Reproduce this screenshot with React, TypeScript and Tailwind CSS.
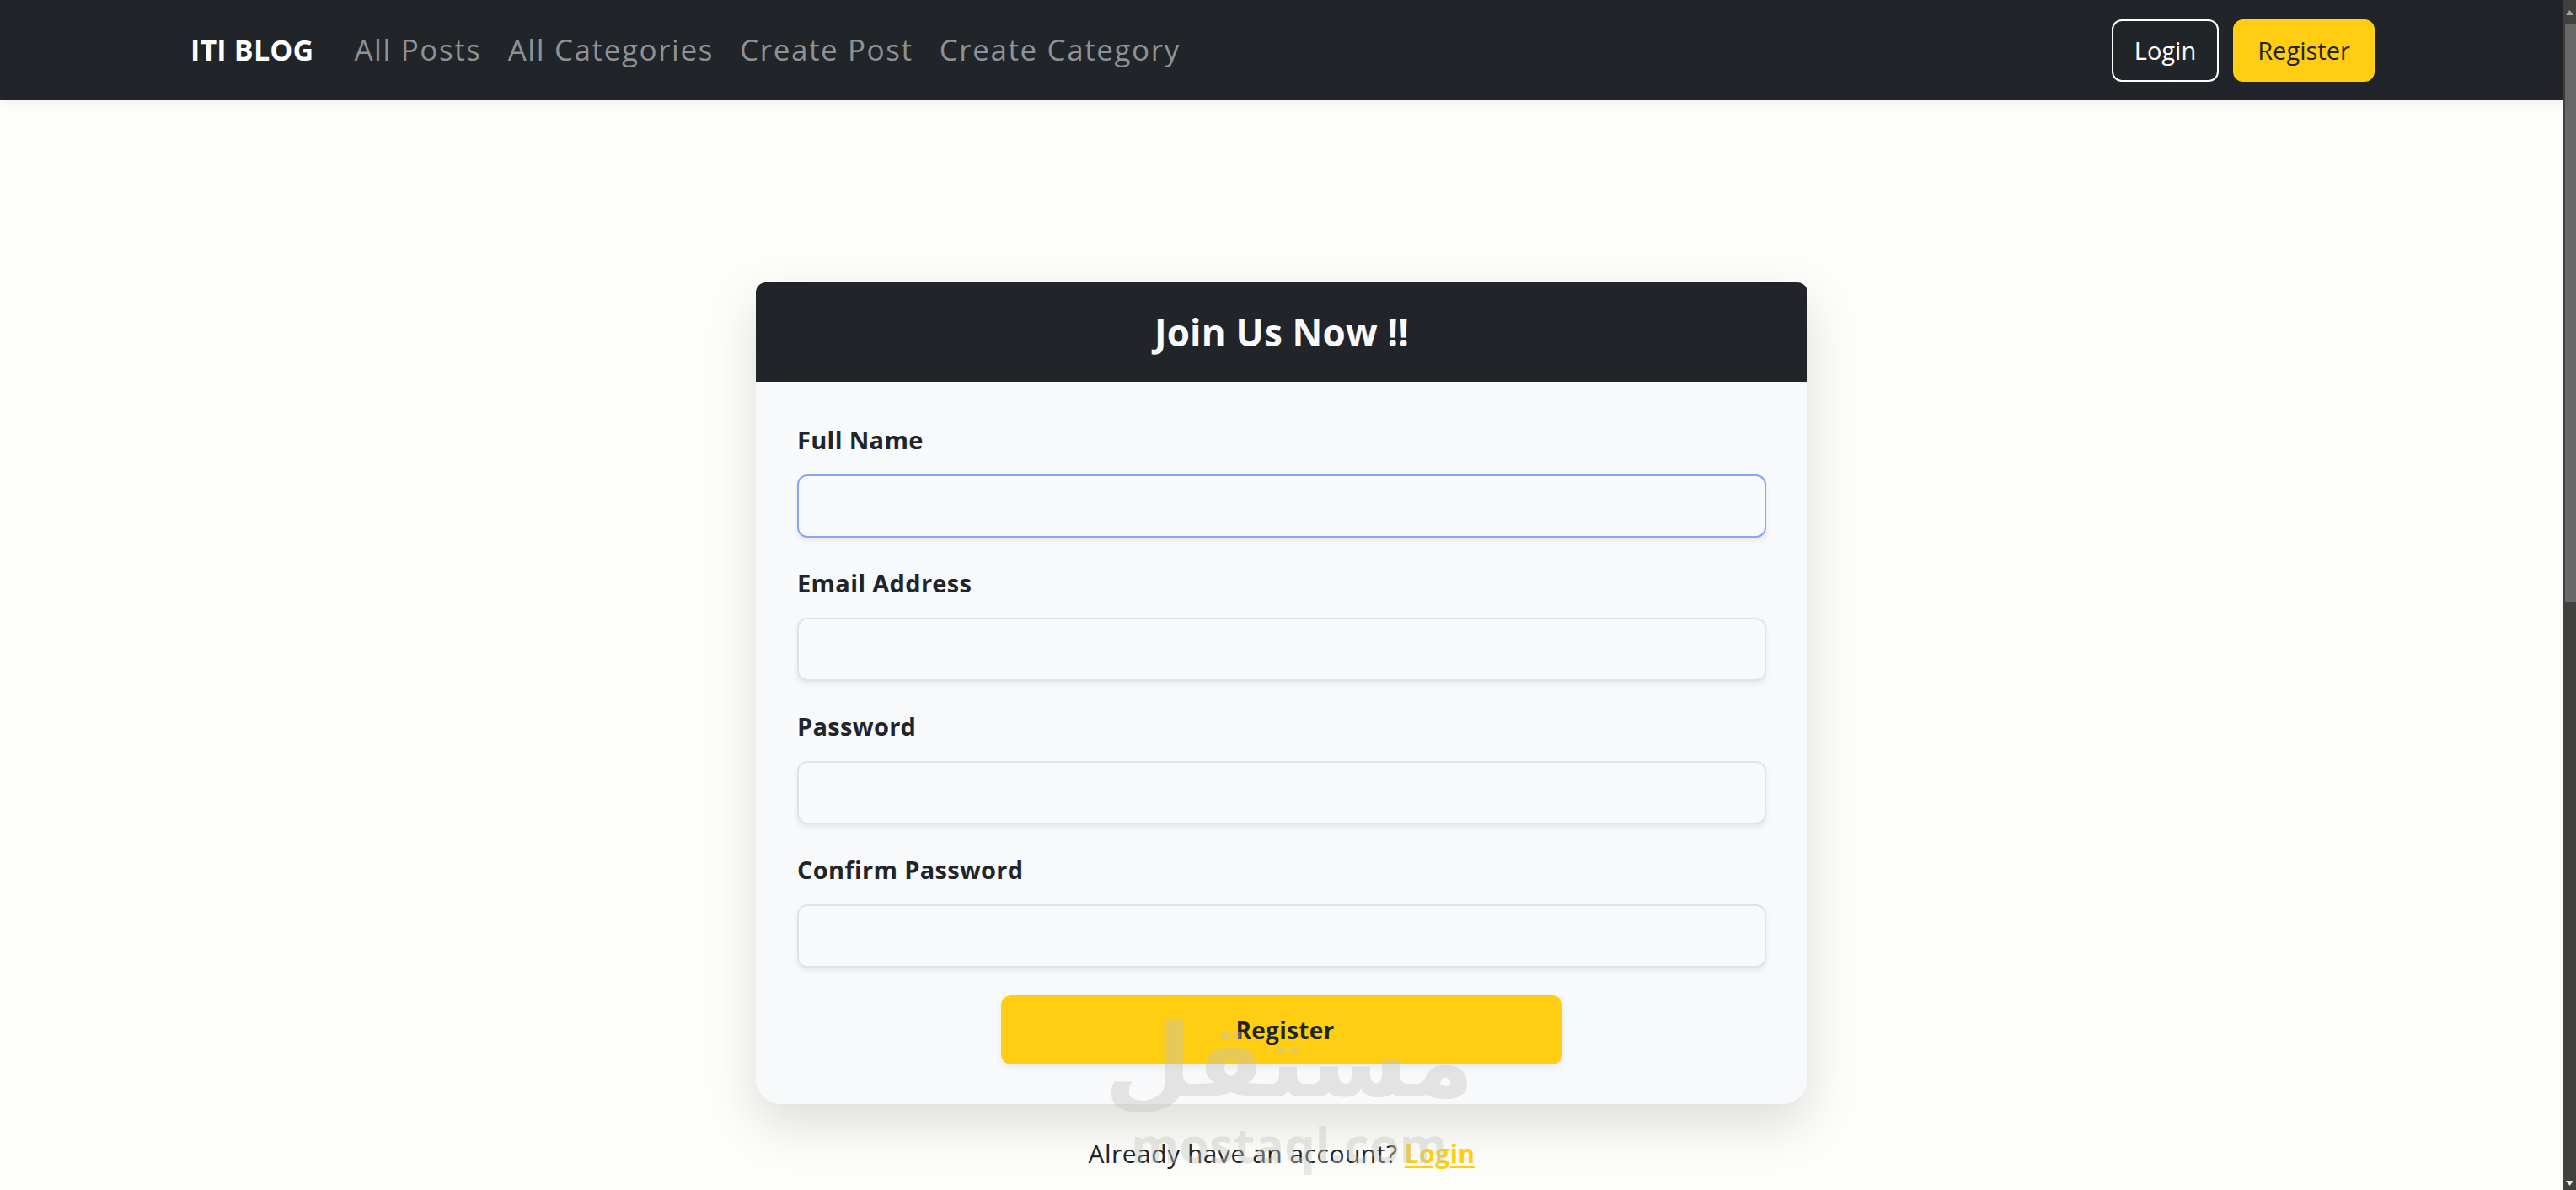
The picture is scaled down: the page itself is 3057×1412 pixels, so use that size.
const links = ["All Posts", "All Categories", "Create Post", "Create Category"];

const fields = [
  { label: "Full Name", type: "text", focused: true },
  { label: "Email Address", type: "email", focused: false },
  { label: "Password", type: "password", focused: false },
  { label: "Confirm Password", type: "password", focused: false },
];

const font = "font-['Open_Sans','Noto_Sans',sans-serif]";

export default function App() {
  return (
    <div className={`flex h-[1412px] w-full overflow-hidden bg-[#fdfdf9] ${font}`}>
      <div className="relative flex min-w-0 flex-1 flex-col">
        {/* Navbar */}
        <header className="relative z-10 flex h-[119px] shrink-0 items-center justify-between bg-[#212529] pl-[226px] pr-[224px] shadow-[0_4px_10px_rgba(0,0,0,0.05)]">
          <div className="flex items-center">
            <span className="mr-[48px] text-[34px] font-bold tracking-[0.2px] text-white">ITI BLOG</span>
            <nav className="flex items-center gap-[31px]">
              {links.map((l) => (
                <a key={l} className="text-[35px] tracking-[1.6px] text-[#8f9194]">
                  {l}
                </a>
              ))}
            </nav>
          </div>
          <div className="flex items-center gap-[17px]">
            <button className="h-[74px] w-[127px] rounded-[12px] border-2 border-white text-[29px] text-white">
              Login
            </button>
            <button className="h-[74px] w-[168px] rounded-[12px] bg-[#ffce12] text-[29px] text-[#212529]">
              Register
            </button>
          </div>
        </header>

        {/* Register card */}
        <main className="flex flex-col items-center pt-[216px]">
          <div className="w-[1248px] rounded-b-[30px] rounded-t-[12px] bg-[#f8f9fb] shadow-[0_24px_60px_rgba(0,0,0,0.13)]">
            <div className="flex h-[118px] items-center justify-center rounded-t-[12px] bg-[#212529]">
              <h1 className="text-[44px] font-bold tracking-[0.2px] text-[#f8f9fa]">Join Us Now !!</h1>
            </div>
            <form className="flex flex-col px-[49px] pb-[47px] pt-[48px]">
              {fields.map((f) => (
                <div key={f.label} className="mb-[33px] flex flex-col">
                  <label className="mb-[20px] text-[29px] font-bold leading-[42px] tracking-[0.3px] text-[#212529]">
                    {f.label}
                  </label>
                  <input
                    type={f.type}
                    className={`h-[75px] w-full rounded-[12px] border-2 bg-[#f8f9fb] px-4 shadow-[0_4px_6px_rgba(0,0,0,0.07)] outline-none ${
                      f.focused ? "border-[#86a8f6]" : "border-[#e1e3e6]"
                    }`}
                  />
                </div>
              ))}
              <button
                type="button"
                className="mx-auto h-[82px] w-[666px] rounded-[12px] bg-[#ffce12] pl-[8px] text-[28px] font-bold tracking-[0.3px] text-[#212529] shadow-[0_4px_8px_rgba(0,0,0,0.06)]"
              >
                Register
              </button>
            </form>
          </div>
          <p className="mt-[36px] text-[30px] tracking-[0.5px] text-[#212529]">
            Already have an account?{" "}
            <a className="font-bold text-[#ffce12] underline decoration-2 underline-offset-4">Login</a>
          </p>
        </main>

        {/* watermark */}
        <div className="pointer-events-none absolute left-[1345px] top-[1190px] flex w-[370px] flex-col items-center leading-none text-[#c4c4c0] opacity-40">
          <span className="font-['DejaVu_Sans',sans-serif] text-[120px] font-bold leading-[140px]">مستقل</span>
          <span className="text-[58px] font-bold leading-[56px]">mostaql.com</span>
        </div>
      </div>

      {/* scrollbar */}
      <div className="relative flex w-[15px] shrink-0 flex-col bg-[#424140]">
        <div className="flex h-[29px] items-center justify-center">
          <svg width="9" height="6" viewBox="0 0 9 6">
            <path d="M4.5 0L9 6H0z" fill="#a3a3a3" />
          </svg>
        </div>
        <div className="ml-[2px] h-[685px] bg-[#686868]" />
        <div className="flex-1" />
        <div className="flex h-[16px] items-center justify-center">
          <svg width="9" height="6" viewBox="0 0 9 6">
            <path d="M0 0H9L4.5 6z" fill="#e5e5e5" />
          </svg>
        </div>
      </div>
    </div>
  );
}
